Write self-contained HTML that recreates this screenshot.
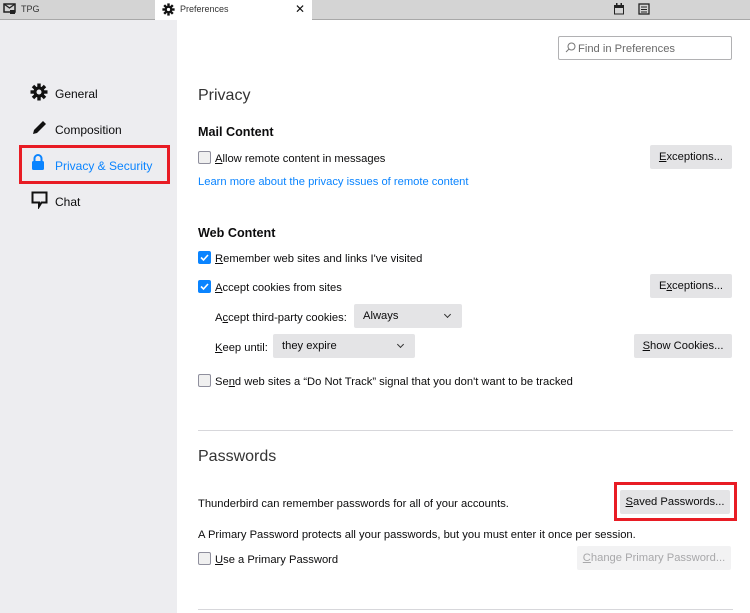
<!DOCTYPE html>
<html><head><style>
*{margin:0;padding:0;box-sizing:border-box}
body{width:750px;height:613px;overflow:hidden;background:#fff;font-family:"Liberation Sans",sans-serif;font-size:11.2px;color:#0c0c0d;position:relative}
.a{position:absolute;white-space:nowrap}
.t{margin-top:1.5px}
.tabbar{position:absolute;left:0;top:0;width:750px;height:20px;background:#d4d4d4;border-bottom:1px solid #a8a8a8}
.side{position:absolute;left:0;top:20px;width:177px;height:593px;background:#ededf0}
.nav{font-size:12px;color:#0c0c0d}
.h1{font-size:16px;color:#333;font-weight:normal}
.h2{font-size:12.6px;font-weight:bold}
.cb{position:absolute;width:13px;height:13px;border:1px solid #8f8f9d;background:#f0f0f0;border-radius:2px}
.cb.on{background:#0a84ff;border-color:#0a84ff}
.btn{position:absolute;height:24px;background:#e4e4e6;border-radius:2px;text-align:center;line-height:25px;font-size:11.2px;color:#0c0c0d}
.sel{position:absolute;height:24px;background:#e4e4e6;border-radius:2px;line-height:25px;padding-left:9px;font-size:11.2px}
.sel:after{content:"";position:absolute;right:12px;top:8px;width:4px;height:4px;border-right:1.5px solid #333;border-bottom:1.5px solid #333;transform:rotate(45deg)}
.link{color:#0a84ff}
.hr{position:absolute;left:198px;width:535px;height:1px;background:#d7d7db}
.red{position:absolute;border:3px solid #e81c24}
</style></head><body>
<div class="tabbar"></div>
<div class="a" style="left:155px;top:0;width:157px;height:21px;background:#fff"></div>
<svg class="a" style="left:3px;top:3px" width="13" height="12" viewBox="0 0 13 12"><rect x="1" y="1" width="11" height="8" fill="none" stroke="#222" stroke-width="1.5"/><path d="M1 1l5.5 4 5.5-4" fill="none" stroke="#222" stroke-width="1.3"/><rect x="7" y="7" width="5" height="4" fill="#222"/></svg>
<div class="a" style="left:21px;top:4px;font-size:9px;color:#333">TPG</div>
<svg class="a" style="left:162px;top:3px" width="13" height="13" viewBox="-8 -8 16 16"><g fill="#111"><circle r="4.5"/><rect x="-1.5" y="-7.5" width="3" height="15"/><rect x="-7.5" y="-1.5" width="15" height="3"/><rect x="-1.5" y="-7.5" width="3" height="15" transform="rotate(45)"/><rect x="-1.5" y="-7.5" width="3" height="15" transform="rotate(-45)"/></g><circle r="2" fill="#fff"/></svg>
<div class="a" style="left:180px;top:4px;font-size:9px;color:#333">Preferences</div>
<div class="a" style="left:295px;top:2px;font-size:12px;color:#111">✕</div>
<svg class="a" style="left:613px;top:3px" width="12" height="12"><rect x="1.5" y="2.5" width="9" height="8.5" fill="none" stroke="#222"/><rect x="1.5" y="2.5" width="9" height="2.5" fill="#222"/><rect x="3" y="0" width="1.5" height="3" fill="#222"/><rect x="7.5" y="0" width="1.5" height="3" fill="#222"/></svg>
<svg class="a" style="left:638px;top:3px" width="12" height="12"><rect x="1" y="1" width="10" height="10" fill="none" stroke="#222" stroke-width="1.3"/><path d="M3 4h6M3 6.5h6M3 9h6" stroke="#222"/></svg>

<div class="side"></div>
<svg class="a" style="left:30px;top:83px" width="18" height="18" viewBox="-9 -9 18 18"><g fill="#111"><circle r="5.5"/><rect x="-1.7" y="-8.5" width="3.4" height="17"/><rect x="-8.5" y="-1.7" width="17" height="3.4"/><rect x="-1.7" y="-8.5" width="3.4" height="17" transform="rotate(45)"/><rect x="-1.7" y="-8.5" width="3.4" height="17" transform="rotate(-45)"/></g><circle r="2.5" fill="#ededf0"/></svg>
<div class="a nav t" style="left:55px;top:85px">General</div>
<svg class="a" style="left:31px;top:119px" width="17" height="17"><path d="M2 15l1-4 9-9 3 3-9 9z" fill="#111"/></svg>
<div class="a nav t" style="left:55px;top:121px">Composition</div>
<svg class="a" style="left:31px;top:153px" width="14" height="18"><path d="M3.5 8V5.5a3.5 3.5 0 0 1 7 0V8" fill="none" stroke="#0a84ff" stroke-width="2"/><rect x="1" y="8" width="12" height="9" rx="1.5" fill="#0a84ff"/></svg>
<div class="a nav t" style="left:55px;top:157px;color:#0a84ff">Privacy &amp; Security</div>
<div class="red" style="left:19px;top:145px;width:151px;height:39px"></div>
<svg class="a" style="left:31px;top:191px" width="18" height="18"><path d="M1.5 1.5h14v10h-5l-2.5 4v-4h-6.5z" fill="none" stroke="#111" stroke-width="2"/></svg>
<div class="a nav t" style="left:55px;top:193px">Chat</div>

<div class="a" style="left:558px;top:36px;width:174px;height:24px;border:1px solid #b1b1b3;border-radius:2px"></div>
<svg class="a" style="left:565px;top:42px" width="11" height="11"><circle cx="6.5" cy="4.5" r="3.5" fill="none" stroke="#777"/><path d="M4 7L1 10" stroke="#777"/></svg>
<div class="a t" style="left:578px;top:41px;color:#6a6a6a">Find in Preferences</div>

<div class="a h1 t" style="left:198px;top:85px">Privacy</div>
<div class="a h2 t" style="left:198px;top:123px">Mail Content</div>
<div class="cb" style="left:198px;top:151px"></div>
<div class="a t" style="left:215px;top:151px"><u>A</u>llow remote content in messages</div>
<div class="btn" style="left:650px;top:145px;width:82px"><u>E</u>xceptions...</div>
<div class="a link t" style="left:198px;top:174px">Learn more about the privacy issues of remote content</div>

<div class="a h2 t" style="left:198px;top:224px">Web Content</div>
<div class="cb on" style="left:198px;top:251px"><svg width="11" height="11" style="position:absolute;left:0;top:0"><path d="M2 5.5l2.5 2.5 4.5-5" fill="none" stroke="#fff" stroke-width="1.6"/></svg></div>
<div class="a t" style="left:215px;top:251px"><u>R</u>emember web sites and links I've visited</div>
<div class="cb on" style="left:198px;top:280px"><svg width="11" height="11" style="position:absolute;left:0;top:0"><path d="M2 5.5l2.5 2.5 4.5-5" fill="none" stroke="#fff" stroke-width="1.6"/></svg></div>
<div class="a t" style="left:215px;top:280px"><u>A</u>ccept cookies from sites</div>
<div class="btn" style="left:650px;top:274px;width:82px">E<u>x</u>ceptions...</div>
<div class="a t" style="left:215px;top:310px">A<u>c</u>cept third-party cookies:</div>
<div class="sel" style="left:354px;top:304px;width:108px">Always</div>
<div class="a t" style="left:215px;top:340px"><u>K</u>eep until:</div>
<div class="sel" style="left:273px;top:334px;width:142px">they expire</div>
<div class="btn" style="left:634px;top:334px;width:98px"><u>S</u>how Cookies...</div>
<div class="cb" style="left:198px;top:374px"></div>
<div class="a t" style="left:215px;top:374px">Se<u>n</u>d web sites a “Do Not Track” signal that you don't want to be tracked</div>

<div class="hr" style="top:430px"></div>
<div class="a h1 t" style="left:198px;top:446px">Passwords</div>
<div class="a t" style="left:198px;top:496px">Thunderbird can remember passwords for all of your accounts.</div>
<div class="btn" style="left:620px;top:490px;width:110px"><u>S</u>aved Passwords...</div>
<div class="red" style="left:614px;top:482px;width:123px;height:39px"></div>
<div class="a t" style="left:198px;top:527px">A Primary Password protects all your passwords, but you must enter it once per session.</div>
<div class="cb" style="left:198px;top:552px"></div>
<div class="a t" style="left:215px;top:552px"><u>U</u>se a Primary Password</div>
<div class="btn" style="left:577px;top:546px;width:154px;background:#f2f2f3;color:#a8a8aa"><u>C</u>hange Primary Password...</div>
<div class="hr" style="top:609px"></div>
</body></html>
